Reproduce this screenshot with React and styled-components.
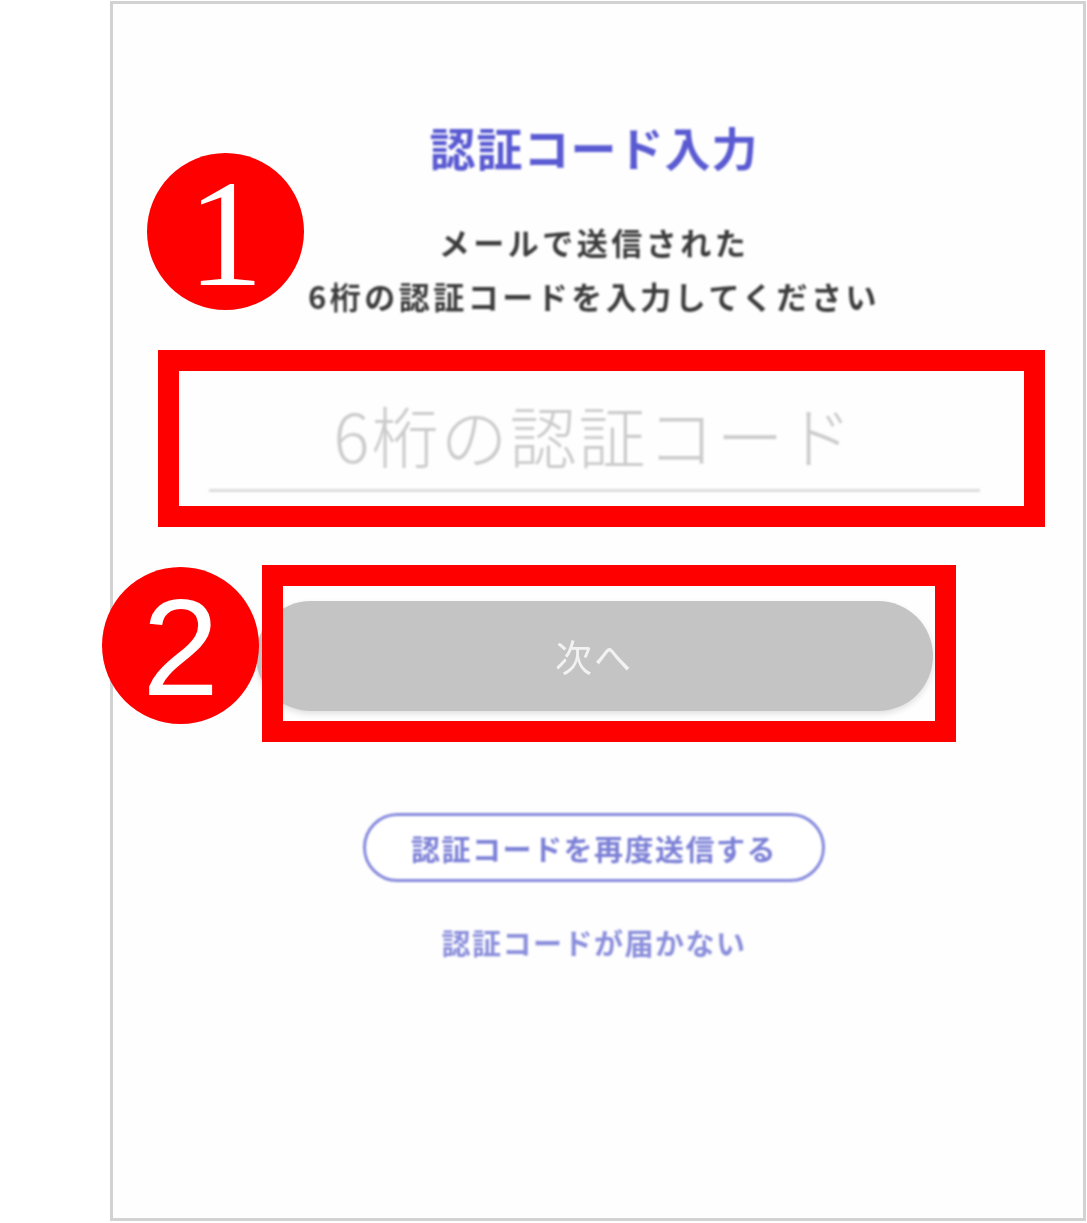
import React from "react";
import styled, { createGlobalStyle } from "styled-components";

const GlobalStyle = createGlobalStyle`
  html, body {
    margin: 0;
    padding: 0;
    background: #ffffff;
  }
  body {
    font-family: "Noto Sans CJK JP", "Noto Sans", sans-serif;
  }
`;

const Page = styled.div`
  position: relative;
  width: 1087px;
  height: 1223px;
  overflow: hidden;
`;

const Phone = styled.div`
  box-sizing: border-box;
  margin: 1px 0 0 110px;
  width: 976px;
  height: 1220px;
  border: 3px solid #d2d2d2;
  background: #fefefe;
  display: flex;
  flex-direction: column;
  align-items: center;
  padding: 112px 8px 0 0;
`;

const Title = styled.h1`
  margin: 0;
  font-size: 46px;
  line-height: 60px;
  font-weight: 700;
  color: #5a5ad2;
  letter-spacing: 1px;
  filter: blur(0.8px);
`;

const Lead = styled.p`
  margin: 39px 0 0;
  font-size: 31px;
  line-height: 54px;
  font-weight: 700;
  color: #3c3c3c;
  text-align: center;
  letter-spacing: 3.5px;
  filter: blur(0.8px);
`;

const CodeField = styled.div`
  margin-top: 64px;
  width: 771px;
  height: 102px;
  border-bottom: 3px solid #dcdcdc;
  display: flex;
  align-items: center;
  justify-content: center;
  filter: blur(0.8px);
`;

const Placeholder = styled.span`
  font-size: 67px;
  line-height: 1;
  font-weight: 300;
  color: #cbcbcb;
  letter-spacing: 2px;
  padding-bottom: 10px;
`;

const NextButton = styled.button`
  margin-top: 109px;
  width: 677px;
  height: 110px;
  border: none;
  border-radius: 55px;
  background: #c4c4c4;
  box-shadow: 0 3px 6px rgba(0, 0, 0, 0.12);
  color: #f2f2f2;
  font-family: inherit;
  font-size: 37px;
  font-weight: 400;
  letter-spacing: 2px;
  filter: blur(0.6px);
`;

const ResendButton = styled.button`
  margin-top: 102px;
  box-sizing: border-box;
  width: 462px;
  height: 69px;
  border: 3px solid #8589dc;
  border-radius: 35px;
  background: #ffffff;
  color: #7c80d6;
  font-family: inherit;
  font-size: 29px;
  font-weight: 700;
  letter-spacing: 1.5px;
  filter: blur(0.8px);
`;

const HelpLink = styled.a`
  margin-top: 40px;
  font-size: 29px;
  line-height: 40px;
  font-weight: 700;
  color: #8a8edb;
  letter-spacing: 1.5px;
  text-decoration: none;
  filter: blur(0.8px);
`;

const Marker = styled.div`
  position: absolute;
  left: ${(p) => p.x}px;
  top: ${(p) => p.y}px;
  width: 157px;
  height: 157px;
  border-radius: 50%;
  background: #ff0000;
  color: #ffffff;
  display: flex;
  align-items: center;
  justify-content: center;
  font-family: ${(p) =>
    p.serif ? '"Liberation Serif", serif' : '"Liberation Sans", sans-serif'};
  font-size: ${(p) => (p.serif ? 152 : 138)}px;
  line-height: 1;
  padding-top: ${(p) => (p.serif ? 4 : 2)}px;
  box-sizing: border-box;
`;

const Frame = styled.div`
  position: absolute;
  box-sizing: border-box;
  left: ${(p) => p.x}px;
  top: ${(p) => p.y}px;
  width: ${(p) => p.w}px;
  height: ${(p) => p.h}px;
  border: 21px solid #ff0000;
`;

export default function App() {
  return (
    <Page>
      <GlobalStyle />
      <Phone>
        <Title>認証コード入力</Title>
        <Lead>
          メールで送信された
          <br />
          6桁の認証コードを入力してください
        </Lead>
        <CodeField>
          <Placeholder>6桁の認証コード</Placeholder>
        </CodeField>
        <NextButton disabled>次へ</NextButton>
        <ResendButton>認証コードを再度送信する</ResendButton>
        <HelpLink href="#">認証コードが届かない</HelpLink>
      </Phone>

      <Frame x={158} y={350} w={887} h={177} />
      <Frame x={262} y={565} w={694} h={177} />
      <Marker x={147} y={153} serif>
        1
      </Marker>
      <Marker x={102} y={567}>
        2
      </Marker>
    </Page>
  );
}
